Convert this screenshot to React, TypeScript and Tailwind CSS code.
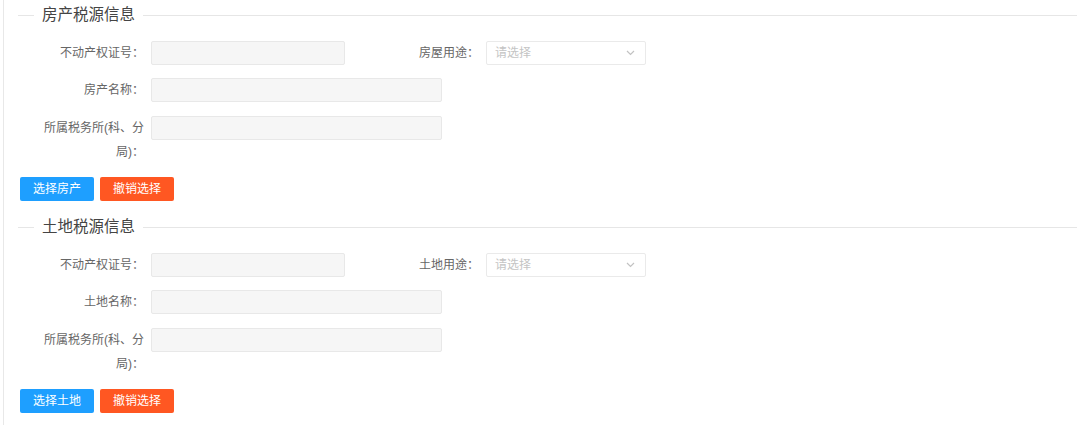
const font = { fontFamily: '"Liberation Sans", "Noto Sans CJK SC", sans-serif' };

const Legend = ({ title }: { title: string }) => (
  <div className="flex items-center h-[30px]">
    <div className="w-[16px] h-px bg-[#e6e6e6]"></div>
    <span className="px-[8px] text-[15.5px] leading-none text-[#444]">{title}</span>
    <div className="flex-1 h-px bg-[#e6e6e6]"></div>
  </div>
);

const Label = ({ text, className = "" }: { text: string; className?: string }) => (
  <label className={`w-[104px] shrink-0 text-right text-[12px] leading-[24px] text-[#666] ${className}`}>
    {text}
  </label>
);

const Field = ({ width }: { width: string }) => (
  <div className={`${width} h-[24px] ml-[7px] border border-[#e8e8e8] bg-[#f6f6f6] rounded-[2px]`}></div>
);

const Select = () => (
  <div className="w-[160px] h-[24px] ml-[7px] flex items-center justify-between pl-[8px] pr-[10px] border border-[#eaeaea] bg-white rounded-[2px]">
    <span className="text-[12px] text-[#c4c4c4]">请选择</span>
    <svg width="9" height="6" viewBox="0 0 9 6" fill="none">
      <path d="M1 1l3.5 3.5L8 1" stroke="#c2c2c2" strokeWidth="1.2" />
    </svg>
  </div>
);

const Section = ({ title, kind, nameLabel, useLabel, btn }: { title: string; kind: string; nameLabel: string; useLabel: string; btn: string }) => (
  <section>
    <Legend title={title} />
    <div className="flex mt-[11px] pl-[22px]">
      <Label text="不动产权证号：" />
      <Field width="w-[194px]" />
      <Label text={useLabel} className="ml-[30px]" />
      <Select />
    </div>
    <div className="flex mt-[13px] pl-[22px]">
      <Label text={nameLabel} />
      <Field width="w-[291px]" />
    </div>
    <div className="flex items-start mt-[14px] pl-[22px]">
      <Label text="所属税务所(科、分局)：" />
      <Field width="w-[291px]" />
    </div>
    <div className="flex gap-[6px] mt-[13px] pl-[2px]" data-kind={kind}>
      <button className="w-[74px] h-[24px] rounded-[2px] bg-[#1e9fff] text-white text-[12px]">{btn}</button>
      <button className="w-[74px] h-[24px] rounded-[2px] bg-[#ff5722] text-white text-[12px]">撤销选择</button>
    </div>
  </section>
);

export default function App() {
  return (
    <div className="w-[1080px] h-[425px] bg-white pl-[3px] overflow-hidden" style={font}>
      <div className="h-full border-l border-[#e8e8e8] pl-[14px] pr-[3px]">
        <Section title="房产税源信息" kind="house" nameLabel="房产名称：" useLabel="房屋用途：" btn="选择房产" />
        <div className="mt-[11px]">
          <Section title="土地税源信息" kind="land" nameLabel="土地名称：" useLabel="土地用途：" btn="选择土地" />
        </div>
      </div>
    </div>
  );
}
